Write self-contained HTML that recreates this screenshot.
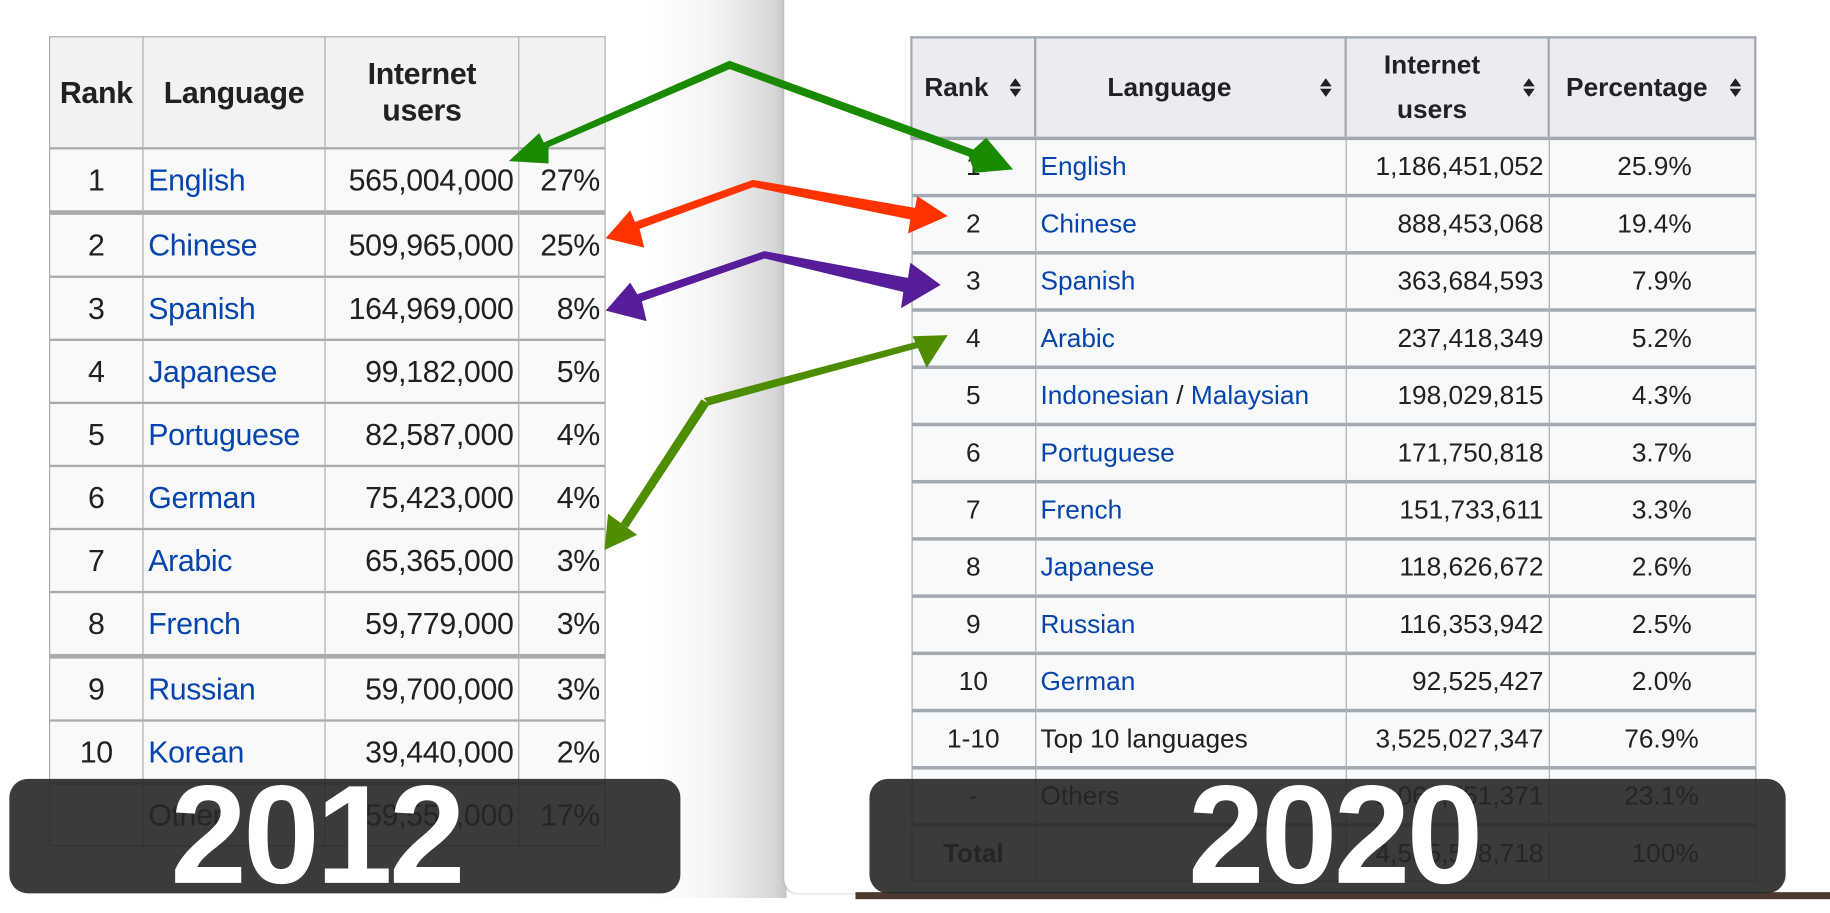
<!DOCTYPE html>
<html><head><meta charset="utf-8"><style>
html,body{margin:0;padding:0;width:1830px;height:898px;overflow:hidden;background:#fff;}
#w{position:absolute;left:0;top:0;width:1568px;height:769px;transform:scale(1.16709,1.16775);transform-origin:0 0;font-family:"Liberation Sans",Arial,sans-serif;}
.shade{position:absolute;left:560px;top:0;width:114px;height:769px;background:linear-gradient(to right,#fff 0%,#f4f4f4 45%,#d8d8d8 90%,#c4c4c4 100%);}
.panel{position:absolute;left:672px;top:0;width:900px;height:765px;background:#fff;border-bottom-left-radius:12px;box-shadow:-1px 0 2px #bbb;}
.dark{position:absolute;left:733px;top:764px;width:840px;height:6px;background:#4a3a30;}
table{position:absolute;border-collapse:collapse;table-layout:fixed;}
td,th{border:1px solid #a2a9b1;padding:0 4px;color:#202122;overflow:hidden;white-space:nowrap;}
#t1{left:42px;top:31px;font-size:26px;letter-spacing:-0.3px;}
#t1 th{background:#f2f2f2;font-weight:bold;border-color:#aaa;white-space:normal;}
#t1 td{background:#f9f9f9;border-color:#aaa;height:52px;border-width:2px 1px 1px 1px;}
.thick td{border-top:4px solid #aaa !important;}
#t2{left:780px;top:31px;font-size:22.5px;}
#t2 th{background:#eaecf0;font-weight:bold;border:2px solid #a2a9b1;position:relative;white-space:normal;}
#t2 td{background:#f8f9fa;height:46px;border:1px solid #a2a9b1;border-top:3px solid #a2a9b1;}
#t2 td.p{text-align:right;padding-right:54px;}
a{color:#0645ad;text-decoration:none;}
.c{text-align:center}.r{text-align:right}
.s{position:absolute;right:10px;top:50%;margin-top:-9px;}
.box{position:absolute;top:667px;height:98px;background:rgba(38,38,38,0.9);border-radius:16px;}
.num{position:absolute;top:655px;color:#fff;font-weight:bold;font-size:120px;line-height:120px;white-space:nowrap;transform:scaleX(0.98);transform-origin:0 0;letter-spacing:-3px;}
</style></head><body><div id="w">
<div class="shade"></div>
<div class="panel"></div>
<div class="dark"></div>

<table id="t1">
<col style="width:80px"><col style="width:156px"><col style="width:166px"><col style="width:74px">
<tr><th style="height:94px">Rank</th><th>Language</th><th>Internet<br>users</th><th></th></tr>
<tr><td class="c">1</td><td><a>English</a></td><td class="r">565,004,000</td><td class="r">27%</td></tr>
<tr class="thick"><td class="c">2</td><td><a>Chinese</a></td><td class="r">509,965,000</td><td class="r">25%</td></tr>
<tr><td class="c">3</td><td><a>Spanish</a></td><td class="r">164,969,000</td><td class="r">8%</td></tr>
<tr><td class="c">4</td><td><a>Japanese</a></td><td class="r">99,182,000</td><td class="r">5%</td></tr>
<tr><td class="c">5</td><td><a>Portuguese</a></td><td class="r">82,587,000</td><td class="r">4%</td></tr>
<tr><td class="c">6</td><td><a>German</a></td><td class="r">75,423,000</td><td class="r">4%</td></tr>
<tr><td class="c">7</td><td><a>Arabic</a></td><td class="r">65,365,000</td><td class="r">3%</td></tr>
<tr><td class="c">8</td><td><a>French</a></td><td class="r">59,779,000</td><td class="r">3%</td></tr>
<tr class="thick"><td class="c">9</td><td><a>Russian</a></td><td class="r">59,700,000</td><td class="r">3%</td></tr>
<tr><td class="c">10</td><td><a>Korean</a></td><td class="r">39,440,000</td><td class="r">2%</td></tr>
<tr><td class="c"></td><td>Others</td><td class="r">359,557,000</td><td class="r">17%</td></tr>
</table>

<table id="t2">
<col style="width:106px"><col style="width:266px"><col style="width:174px"><col style="width:177px">
<tr><th style="height:84px;text-align:left;padding-left:10px">Rank<svg class="s" width="12" height="18" viewBox="0 0 12 18"><path d="M6 1L11 8H1Z M6 17L11 10H1Z" fill="#202122"/></svg></th>
<th style="padding-right:40px">Language<svg class="s" width="12" height="18" viewBox="0 0 12 18"><path d="M6 1L11 8H1Z M6 17L11 10H1Z" fill="#202122"/></svg></th>
<th style="padding-right:30px;line-height:38px">Internet<br>users<svg class="s" width="12" height="18" viewBox="0 0 12 18"><path d="M6 1L11 8H1Z M6 17L11 10H1Z" fill="#202122"/></svg></th>
<th style="padding-right:30px">Percentage<svg class="s" width="12" height="18" viewBox="0 0 12 18"><path d="M6 1L11 8H1Z M6 17L11 10H1Z" fill="#202122"/></svg></th></tr>
<tr><td class="c">1</td><td><a>English</a></td><td class="r">1,186,451,052</td><td class="p">25.9%</td></tr>
<tr><td class="c">2</td><td><a>Chinese</a></td><td class="r">888,453,068</td><td class="p">19.4%</td></tr>
<tr><td class="c">3</td><td><a>Spanish</a></td><td class="r">363,684,593</td><td class="p">7.9%</td></tr>
<tr><td class="c">4</td><td><a>Arabic</a></td><td class="r">237,418,349</td><td class="p">5.2%</td></tr>
<tr><td class="c">5</td><td><a>Indonesian</a> / <a>Malaysian</a></td><td class="r">198,029,815</td><td class="p">4.3%</td></tr>
<tr><td class="c">6</td><td><a>Portuguese</a></td><td class="r">171,750,818</td><td class="p">3.7%</td></tr>
<tr><td class="c">7</td><td><a>French</a></td><td class="r">151,733,611</td><td class="p">3.3%</td></tr>
<tr><td class="c">8</td><td><a>Japanese</a></td><td class="r">118,626,672</td><td class="p">2.6%</td></tr>
<tr><td class="c">9</td><td><a>Russian</a></td><td class="r">116,353,942</td><td class="p">2.5%</td></tr>
<tr><td class="c">10</td><td><a>German</a></td><td class="r">92,525,427</td><td class="p">2.0%</td></tr>
<tr><td class="c">1-10</td><td>Top 10 languages</td><td class="r">3,525,027,347</td><td class="p" style="padding-right:48px">76.9%</td></tr>
<tr><td class="c">-</td><td>Others</td><td class="r">1,060,751,371</td><td class="p" style="padding-right:48px">23.1%</td></tr>
<tr><td class="c"><b>Total</b></td><td></td><td class="r">4,585,578,718</td><td class="p" style="padding-right:48px">100%</td></tr>
</table>

<svg style="position:absolute;left:0;top:0" width="1568" height="769">
<polygon fill="#1a8a00" points="625,52 628,58 470,126 470,140 436,138 462,114 466,122"/>
<polygon fill="#1a8a00" points="625,52 622,58 830,134 835,148 868,145 845,118 834,128"/>
<polygon fill="#ff3300" points="645,154 646,160 548,196 552,212 519,204 540,180 544,190"/>
<polygon fill="#ff3300" points="645,154 644,160 780,188 778,200 812,185 786,168 784,178"/>
<polygon fill="#561c9a" points="655,215 656,221 550,258 554,275 519,266 540,242 546,252"/>
<polygon fill="#561c9a" points="655,215 654,221 774,250 772,264 806,244 780,225 778,238"/>
<polygon fill="#4e8d00" points="603,341 788,292 790,297 608,347"/>
<polygon fill="#4e8d00" points="812,287 782,288 794,315"/>
<polygon fill="#4e8d00" points="601,342 608,346 538,452 532,448"/>
<polygon fill="#4e8d00" points="518,471 521,440 546,458"/>
</svg>

<div class="box" style="left:8px;width:575px"></div>
<div class="box" style="left:745px;width:785px"></div>
<div class="num" style="left:146px">2012</div>
<div class="num" style="left:1018px">2020</div>
</div></body></html>
